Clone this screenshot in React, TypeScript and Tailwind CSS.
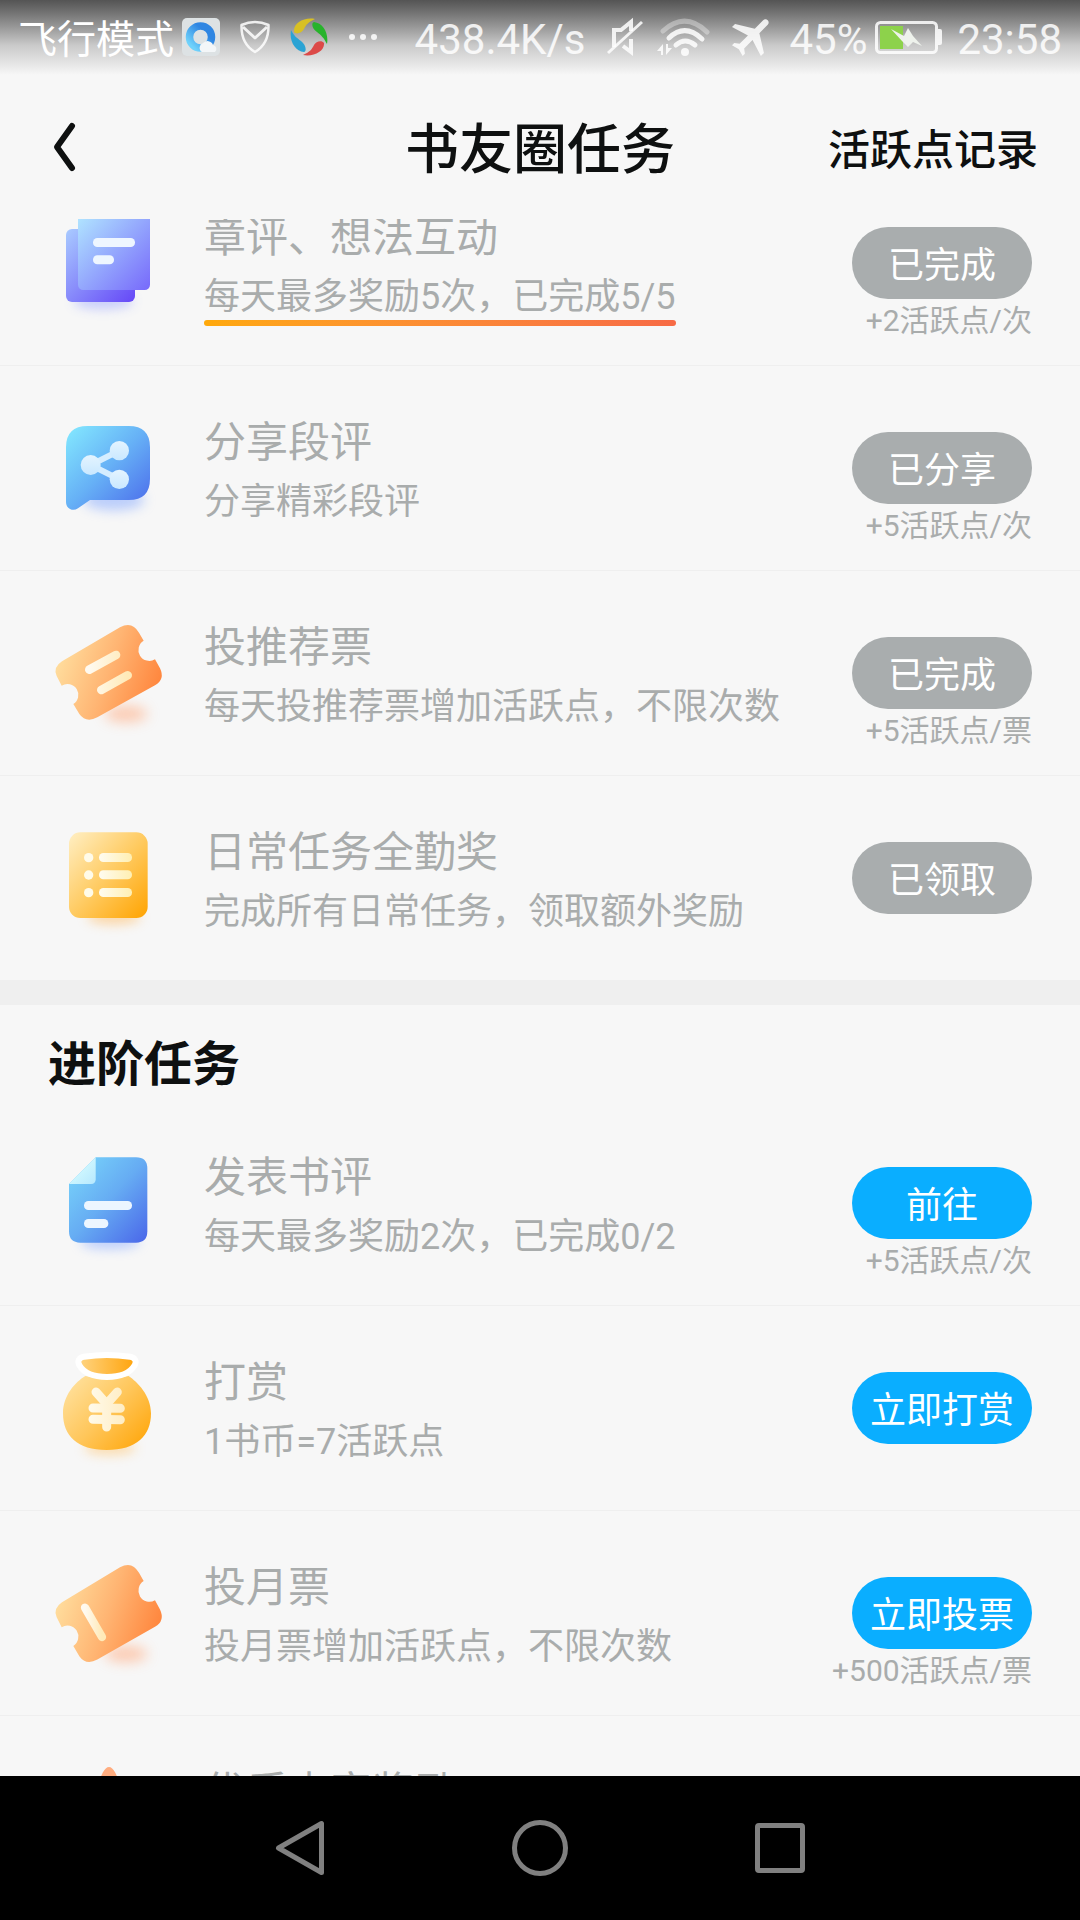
import { useState, type ReactNode } from "react";

type Task = {
  title: string;
  desc: string;
  action: string;
  reward?: string;
  done?: boolean;
  highlight?: boolean;
  icon: ReactNode;
};

function SheetsIcon() {
  return (
    <svg viewBox="0 0 480 420" className="h-[140px] w-40" aria-hidden="true">
      <defs>
        <linearGradient id="sheetBack" x1="0" y1="0" x2="1" y2="1">
          <stop offset="0" stopColor="#a9cbff" />
          <stop offset="1" stopColor="#6547f7" />
        </linearGradient>
        <linearGradient id="sheetFront" x1="0" y1="0" x2="1" y2="1">
          <stop offset="0" stopColor="#b2e8ff" />
          <stop offset="1" stopColor="#7769fb" />
        </linearGradient>
        <filter id="sheetBlur" x="-50%" y="-200%" width="200%" height="500%">
          <feGaussianBlur stdDeviation="16" />
        </filter>
      </defs>
      <ellipse cx="190" cy="325" rx="90" ry="24" fill="#8f9bff" opacity="0.45" filter="url(#sheetBlur)" />
      <rect x="78" y="108" width="207" height="219" rx="18" fill="url(#sheetBack)" />
      <rect x="114" y="60" width="216" height="231" rx="16" fill="url(#sheetFront)" />
      <rect x="159" y="135" width="126" height="27" rx="13" fill="#eef6ff" />
      <rect x="159" y="187" width="63" height="27" rx="13" fill="#eef6ff" />
    </svg>
  );
}

function ShareIcon() {
  return (
    <svg viewBox="0 -6 480 420" className="h-[140px] w-40" aria-hidden="true">
      <defs>
        <linearGradient id="shareBg" x1="0" y1="0" x2="1" y2="1">
          <stop offset="0" stopColor="#84eaff" />
          <stop offset="0.5" stopColor="#66b0f6" />
          <stop offset="1" stopColor="#4a68ea" />
        </linearGradient>
        <linearGradient id="shareFg" x1="0" y1="0" x2="0" y2="1">
          <stop offset="0" stopColor="#e4f4ff" />
          <stop offset="1" stopColor="#c9e8ff" />
        </linearGradient>
        <filter id="shareBlur" x="-50%" y="-200%" width="200%" height="500%">
          <feGaussianBlur stdDeviation="18" />
        </filter>
      </defs>
      <ellipse cx="222" cy="300" rx="92" ry="32" fill="#7fa4ff" opacity="0.5" filter="url(#shareBlur)" />
      <path
        d="M143 78H266Q330 78 330 142V236Q330 300 266 300H150L114 325Q102 333 90 327Q78 321 78 306V142Q78 78 143 78Z"
        fill="url(#shareBg)"
      />
      <path d="M238 152L152 195L238 238" fill="none" stroke="#d5edff" strokeWidth="18" />
      <g fill="url(#shareFg)">
        <circle cx="238" cy="152" r="29" />
        <circle cx="152" cy="195" r="30" />
        <circle cx="238" cy="238" r="29" />
      </g>
    </svg>
  );
}

function TicketIcon({ id, tall, children }: { id: string; tall?: boolean; children: ReactNode }) {
  return (
    <svg viewBox="0 9 480 420" className="h-[140px] w-40" aria-hidden="true">
      <defs>
        <linearGradient id={`${id}Bg`} x1="0" y1="0.35" x2="1" y2="0.65">
          <stop offset="0" stopColor="#ffdf9f" />
          <stop offset="0.5" stopColor="#ffb472" />
          <stop offset="1" stopColor="#ff843b" />
        </linearGradient>
        <linearGradient id={`${id}Fg`} x1="0" y1="0" x2="1" y2="0">
          <stop offset="0" stopColor="#fffaf0" />
          <stop offset="1" stopColor="#ffeab8" />
        </linearGradient>
        <filter id={`${id}Blur`} x="-60%" y="-250%" width="220%" height="600%">
          <feGaussianBlur stdDeviation="19" />
        </filter>
      </defs>
      <ellipse cx="258" cy="342" rx="64" ry="24" fill="#ffab80" opacity="0.6" filter={`url(#${id}Blur)`} />
      <path
        transform={tall ? "translate(0 -2) scale(1 1.025)" : undefined}
        d="M66 184L240 82Q276 62 297 98L311 122A31 31 0 0 0 345 178L360 205Q376 238 345 256L172 352Q138 370 118 342L100 312A32 32 0 0 0 65 257L50 228Q38 202 66 184Z"
        fill={`url(#${id}Bg)`}
      />
      {children}
    </svg>
  );
}

function ListIcon() {
  return (
    <svg viewBox="0 -6 480 420" className="h-[140px] w-40" aria-hidden="true">
      <defs>
        <linearGradient id="listBg" x1="0" y1="0" x2="1" y2="1">
          <stop offset="0" stopColor="#ffefc4" />
          <stop offset="0.5" stopColor="#ffcb62" />
          <stop offset="1" stopColor="#ffa300" />
        </linearGradient>
        <linearGradient id="listFg" x1="0" y1="0" x2="1" y2="0">
          <stop offset="0" stopColor="#fffcf0" />
          <stop offset="1" stopColor="#ffefb2" />
        </linearGradient>
        <filter id="listBlur" x="-50%" y="-250%" width="200%" height="600%">
          <feGaussianBlur stdDeviation="16" />
        </filter>
      </defs>
      <ellipse cx="222" cy="322" rx="80" ry="22" fill="#ffb75a" opacity="0.5" filter="url(#listBlur)" />
      <rect x="87" y="67" width="236" height="257" rx="34" fill="url(#listBg)" />
      {[143, 195, 248].map((y) => (
        <g key={y}>
          <circle cx="146" cy={y} r="14" fill="#fffbe9" />
          <rect x="177" y={y - 14} width="99" height="27" rx="13" fill="url(#listFg)" />
        </g>
      ))}
    </svg>
  );
}

function DocIcon() {
  return (
    <svg viewBox="0 9 480 420" className="h-[140px] w-40" aria-hidden="true">
      <defs>
        <linearGradient id="docBg" x1="0" y1="0" x2="1" y2="1">
          <stop offset="0" stopColor="#7ad9fb" />
          <stop offset="0.5" stopColor="#66acf3" />
          <stop offset="1" stopColor="#4a66e9" />
        </linearGradient>
        <linearGradient id="docFold" x1="0" y1="0" x2="1" y2="1">
          <stop offset="0.3" stopColor="#d4fbff" />
          <stop offset="1" stopColor="#b6e8fe" />
        </linearGradient>
        <filter id="docBlur" x="-50%" y="-250%" width="200%" height="600%">
          <feGaussianBlur stdDeviation="16" />
        </filter>
      </defs>
      <ellipse cx="210" cy="336" rx="90" ry="22" fill="#86a8ff" opacity="0.5" filter="url(#docBlur)" />
      <path d="M167 82H288Q322 82 322 116V304Q322 338 288 338H121Q87 338 87 304V162Z" fill="url(#docBg)" />
      <path d="M167 82V148Q167 162 153 162H87Z" fill="url(#docFold)" />
      <rect x="132" y="213" width="144" height="27" rx="13" fill="#ecf6ff" />
      <rect x="132" y="267" width="73" height="27" rx="13" fill="#ecf6ff" />
    </svg>
  );
}

function BagIcon() {
  return (
    <svg viewBox="0 24 480 420" className="h-[140px] w-40" aria-hidden="true">
      <defs>
        <linearGradient id="bagBg" x1="0" y1="0.1" x2="1" y2="0.9">
          <stop offset="0" stopColor="#ffe2a0" />
          <stop offset="0.5" stopColor="#ffc65a" />
          <stop offset="1" stopColor="#ffa508" />
        </linearGradient>
        <linearGradient id="bagMouth" x1="0" y1="0" x2="1" y2="0">
          <stop offset="0" stopColor="#ffd583" />
          <stop offset="1" stopColor="#ffa30a" />
        </linearGradient>
        <linearGradient id="bagFg" x1="146" y1="0" x2="254" y2="0" gradientUnits="userSpaceOnUse">
          <stop offset="0" stopColor="#fffaeb" />
          <stop offset="1" stopColor="#ffedc4" />
        </linearGradient>
        <filter id="bagBlur" x="-50%" y="-250%" width="200%" height="600%">
          <feGaussianBlur stdDeviation="16" />
        </filter>
      </defs>
      <ellipse cx="210" cy="354" rx="78" ry="22" fill="#ffc46c" opacity="0.5" filter="url(#bagBlur)" />
      <path
        d="M136 138Q200 152 266 138C292 156 333 196 333 250C333 318 290 360 200 360C112 360 69 318 69 250C69 196 106 156 136 138Z"
        fill="url(#bagBg)"
      />
      <path
        d="M132 80Q200 70 270 80Q294 86 284 106C270 130 240 141 201 141C162 141 132 130 118 106Q108 86 132 80Z"
        fill="url(#bagMouth)"
        stroke="#fff"
        strokeWidth="18"
      />
      <g fill="none" stroke="url(#bagFg)" strokeWidth="27" strokeLinecap="round">
        <path d="M168 186L200 222L232 186M200 222V291" />
        <path d="M159 234L241 235M159 268L241 269" />
      </g>
    </svg>
  );
}

function StarIcon() {
  return (
    <svg viewBox="0 0 480 420" className="h-[140px] w-40" aria-hidden="true">
      <path
        d="M188 74Q207 40 226 74L258 146L334 158Q348 162 338 174L284 228L296 306Q296 320 282 314L207 276L132 314Q118 320 118 306L130 228L76 174Q66 162 80 158L156 146Z"
        fill="#ffad80"
      />
    </svg>
  );
}

const DAILY_TASKS: Task[] = [
  {
    title: "章评、想法互动",
    desc: "每天最多奖励5次，已完成5/5",
    action: "已完成",
    reward: "+2活跃点/次",
    done: true,
    highlight: true,
    icon: <SheetsIcon />,
  },
  {
    title: "分享段评",
    desc: "分享精彩段评",
    action: "已分享",
    reward: "+5活跃点/次",
    done: true,
    icon: <ShareIcon />,
  },
  {
    title: "投推荐票",
    desc: "每天投推荐票增加活跃点，不限次数",
    action: "已完成",
    reward: "+5活跃点/票",
    done: true,
    icon: (
      <TicketIcon id="recommend">
        <path
          d="M148 209L228 165M184 270L263 226"
          stroke="url(#recommendFg)"
          strokeWidth="26"
          strokeLinecap="round"
        />
      </TicketIcon>
    ),
  },
  {
    title: "日常任务全勤奖",
    desc: "完成所有日常任务，领取额外奖励",
    action: "已领取",
    done: true,
    icon: <ListIcon />,
  },
];

const ADVANCED_TASKS: Task[] = [
  {
    title: "发表书评",
    desc: "每天最多奖励2次，已完成0/2",
    action: "前往",
    reward: "+5活跃点/次",
    icon: <DocIcon />,
  },
  { title: "打赏", desc: "1书币=7活跃点", action: "立即打赏", icon: <BagIcon /> },
  {
    title: "投月票",
    desc: "投月票增加活跃点，不限次数",
    action: "立即投票",
    reward: "+500活跃点/票",
    icon: (
      <TicketIcon id="monthly" tall>
        <path d="M135 203L186 291" stroke="url(#monthlyFg)" strokeWidth="25" strokeLinecap="round" />
      </TicketIcon>
    ),
  },
  { title: "优质内容奖励", desc: "发布优质内容获得奖励", action: "前往", icon: <StarIcon /> },
];

function TaskRow({ task }: { task: Task }) {
  return (
    <li className="flex min-h-[205px] items-center border-b border-[#efefef] pr-12 pl-10">
      {task.icon}
      <div className="ml-1 min-w-0 flex-1 pt-2 text-[#a9acac]">
        <h3 className="text-[42px] leading-[60px]">{task.title}</h3>
        <p className="relative w-fit text-[36px] leading-[58px] whitespace-nowrap">
          {task.desc}
          {task.highlight && (
            <span className="absolute inset-x-0 bottom-0 h-1.5 rounded-full bg-linear-to-r from-[#ffa90a] to-[#f76a45]" />
          )}
        </p>
      </div>
      <div className="flex flex-col items-end self-start pt-[66px]">
        <button
          type="button"
          disabled={task.done}
          className={`h-[72px] w-[180px] rounded-full pt-1.5 text-[36px] leading-10 text-white ${
            task.done ? "bg-[#a9adae]" : "bg-[#0aaeff]"
          }`}
        >
          {task.action}
        </button>
        {task.reward && <p className="text-[30px] leading-[44px] whitespace-nowrap text-[#a9acac]">{task.reward}</p>}
      </div>
    </li>
  );
}

function StatusBar() {
  return (
    <div className="flex h-[75px] shrink-0 items-start justify-between bg-linear-to-b from-[#545454] via-[#c9c9c9] via-60% to-[#f7f7f7] px-[18px] pt-[17px] text-white/85">
      <div className="flex h-10 items-center gap-5">
        <div className="flex items-center gap-2">
          <span className="pt-1.5 text-[39px] leading-10 text-white">飞行模式</span>
          <svg viewBox="0 0 38 38" className="h-[38px] w-[38px]" aria-hidden="true">
            <defs>
              <linearGradient id="browserRing" x1="1" y1="0" x2="0" y2="1">
                <stop offset="0.3" stopColor="#2f86e2" />
                <stop offset="0.9" stopColor="#6fd2fb" />
              </linearGradient>
            </defs>
            <rect width="38" height="38" rx="5" fill="#dde2e4" />
            <circle cx="18.500" cy="19" r="11" fill="none" stroke="url(#browserRing)" strokeWidth="7.500" />
            <path d="M20 34a5 5 0 0 1 1-9 6 6 0 0 1 10 2 4 4 0 0 1 2 7Z" fill="#f3f6f8" />
          </svg>
        </div>
        <svg viewBox="0 0 30 34" className="h-[34px] w-[30px]" fill="none" stroke="currentColor" strokeWidth="2.500" strokeLinejoin="round" aria-hidden="true">
          <path d="M1.500 5Q15-1 28.500 5Q29 24 15 32Q1 24 1.500 5Z" />
          <path d="M3 7L15 18L27 7" strokeWidth="3" />
        </svg>
        <svg viewBox="0 0 38 38" className="h-[38px] w-[38px]" aria-hidden="true">
          <path d="M4 14C3 5 14-1 25 1C18 4 16 7 14 11C12 15 6 17 4 14Z" fill="#d8c024" />
          <path d="M24 4C33 5 39 15 37 26C34 20 31 17 27 14C22 11 21 5 24 4Z" fill="#27b32b" />
          <path d="M34 25C35 33 24 39 13 37C20 34 22 31 24 27C26 23 32 22 34 25Z" fill="#dc4a48" />
          <path d="M14 34C5 33-1 23 1 12C4 18 7 20 11 23C16 27 17 33 14 34Z" fill="#2ba3d4" />
        </svg>
        <svg viewBox="0 0 30 8" className="h-2 w-[30px]" fill="currentColor" aria-hidden="true">
          <circle cx="4" cy="4" r="3" />
          <circle cx="15" cy="4" r="3" />
          <circle cx="26" cy="4" r="3" />
        </svg>
      </div>

      <div className="flex h-10 items-center gap-3.5 text-[42px] leading-10">
        <span className="pt-1.5">438.4K/s</span>
        <svg viewBox="0 0 44 40" className="h-10 w-11" fill="none" stroke="currentColor" strokeWidth="4" aria-hidden="true">
          <path d="M15 30V13H22L32 5V14" />
          <path d="M24 29L32 35V22" />
          <path d="M9 36L43 5" strokeWidth="3" />
        </svg>
        <svg viewBox="0 0 59 40" className="h-10 w-[59px]" fill="none" stroke="currentColor" strokeWidth="5" strokeLinecap="round" aria-hidden="true">
          <path d="M6 14Q28-6 50 15" opacity="0.4" />
          <path d="M12 21Q28 6 45 22" />
          <path d="M19 28Q28 20 38 28" />
          <circle cx="28" cy="35" r="4" fill="currentColor" stroke="none" />
          <path d="M0 34L6 27V38H4V34ZM9 27H11V31H15L9 38Z" fill="currentColor" stroke="none" />
        </svg>
        <svg viewBox="0 0 45 40" className="h-10 w-[45px]" fill="currentColor" aria-hidden="true">
          <path
            transform="translate(21 20) rotate(45) scale(2.150) translate(-11.500 -13)"
            d="M21 16v-2l-8-5V3.500c0-.83-.67-1.500-1.500-1.500S10 2.670 10 3.500V9l-8 5v2l8-2.500V19l-2 1.500V22l3.500-1 3.500 1v-1.500L13 19v-5.500l8 2.500z"
          />
        </svg>
        <div className="flex items-center gap-2">
          <span className="pt-1.5">45%</span>
          <svg viewBox="0 0 68 36" className="h-9 w-[68px]" aria-hidden="true">
            <rect x="1.500" y="3.500" width="60" height="30" rx="4" fill="none" stroke="currentColor" strokeWidth="3" />
            <path d="M63 10H65Q67 10 67 12V24Q67 26 65 26H63Z" fill="currentColor" />
            <rect x="5" y="7" width="23" height="23" fill="#8dd24b" />
            <path d="M16 10L29 17L33 9L38 17L47 27L38 23L33 28L27 22Z" fill="#eef2ec" />
          </svg>
        </div>
        <span className="pt-1.5">23:58</span>
      </div>
    </div>
  );
}

function NavBar() {
  return (
    <nav className="shrink-0 bg-black">
      <div className="mx-auto grid h-36 w-2/3 grid-cols-3 place-items-center text-[#808080]">
        <button type="button" aria-label="返回">
          <svg viewBox="0 0 60 60" className="h-[60px] w-[60px]" fill="none" stroke="currentColor" strokeWidth="5" strokeLinejoin="round" aria-hidden="true">
            <path d="M51.500 5.500V54.500L8.500 30Z" />
          </svg>
        </button>
        <button type="button" aria-label="主屏幕">
          <svg viewBox="0 0 60 60" className="h-[60px] w-[60px]" fill="none" stroke="currentColor" strokeWidth="5" aria-hidden="true">
            <circle cx="30" cy="30" r="25.500" />
          </svg>
        </button>
        <button type="button" aria-label="最近任务">
          <svg viewBox="0 0 60 60" className="h-[60px] w-[60px]" fill="none" stroke="currentColor" strokeWidth="5" aria-hidden="true">
            <rect x="7.500" y="7.500" width="45" height="45" rx="1.500" />
          </svg>
        </button>
      </div>
    </nav>
  );
}

export default function App() {
  const [daily] = useState(DAILY_TASKS);
  const [advanced] = useState(ADVANCED_TASKS);

  return (
    <div className="flex h-screen flex-col bg-[#f7f7f7] font-[Roboto,'Noto_Sans_CJK_SC',sans-serif] text-[#0e1010]">
      <StatusBar />

      <header className="grid h-36 shrink-0 grid-cols-3 items-center px-[42px]">
        <button type="button" aria-label="返回" className="justify-self-start">
          <svg viewBox="0 0 44 60" className="h-[60px] w-11" fill="none" stroke="currentColor" strokeWidth="6" strokeLinecap="round" strokeLinejoin="round" aria-hidden="true">
            <path d="M30 9L15 30L30 51" />
          </svg>
        </button>
        <h1 className="pt-1.5 text-center text-[54px] font-medium whitespace-nowrap">书友圈任务</h1>
        <a href="#records" className="justify-self-end pt-1.5 text-[42px] font-medium whitespace-nowrap">
          活跃点记录
        </a>
      </header>

      <main className="min-h-0 flex-1 overflow-y-auto [scrollbar-width:none]">
        {/* Daily tasks, scrolled partly under the header */}
        <ul className="-mt-[58px]">
          {daily.map((task) => (
            <TaskRow key={task.title} task={task} />
          ))}
        </ul>

        <div className="h-6 bg-[#efefef]" />

        {/* Advanced tasks */}
        <section>
          <h2 className="px-12 pt-6 text-[48px] leading-[72px] font-bold">进阶任务</h2>
          <ul>
            {advanced.map((task) => (
              <TaskRow key={task.title} task={task} />
            ))}
          </ul>
        </section>
      </main>

      <NavBar />
    </div>
  );
}
